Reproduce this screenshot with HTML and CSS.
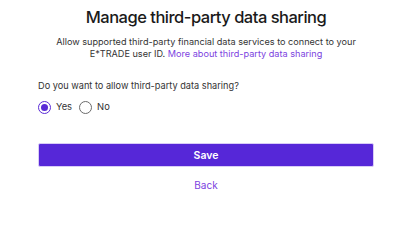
FILE: index.html
```html
<!DOCTYPE html>
<html>
<head>
<meta charset="utf-8">
<link rel="stylesheet" href="styles.css">
</head>
<body>
<main class="page">
  <h1 class="title">Manage third-party data sharing</h1>
  <p class="intro">Allow supported third-party financial data services to connect to your E*TRADE user ID. <a class="link" href="#">More about third-party data sharing</a></p>
  <form class="form">
    <p class="question">Do you want to allow third-party data sharing?</p>
    <div class="options">
      <label class="option"><span class="radio checked"></span>Yes</label>
      <label class="option"><span class="radio"></span>No</label>
    </div>
    <button class="save" type="button">Save</button>
    <a class="back" href="#">Back</a>
  </form>
</main>
</body>
</html>
```
FILE: styles.css
```css
html, body {
  margin: 0;
  padding: 0;
  background: #ffffff;
}
body {
  font-family: Inter, "Noto Sans", sans-serif;
  color: #1f1f1f;
}
.page {
  width: 336px;
  margin-left: 38px;
  padding-top: 5px;
  display: flex;
  flex-direction: column;
}
.title {
  margin: 0;
  font-size: 16.5px;
  line-height: 24px;
  font-weight: 500;
  letter-spacing: -0.5px;
  text-align: center;
  color: #1a1a1a;
}
.intro {
  margin: 7px 0 0;
  font-size: 9.15px;
  line-height: 12px;
  text-align: center;
  color: #333333;
}
.link {
  color: #7c3fe0;
  text-decoration: none;
}
.form {
  display: flex;
  flex-direction: column;
}
.question {
  margin: 20px 0 0;
  font-size: 9.2px;
  line-height: 12px;
  color: #333333;
}
.options {
  margin-top: 8px;
  display: flex;
  gap: 7px;
  align-items: center;
}
.option {
  display: flex;
  align-items: center;
  gap: 5px;
  font-size: 9.4px;
  line-height: 14px;
  color: #333333;
}
.radio {
  width: 11px;
  height: 11px;
  border: 1px solid #6b6b6b;
  border-radius: 50%;
  box-sizing: content-box;
  display: inline-block;
  position: relative;
}
.radio.checked {
  border-color: #5a2bd6;
}
.radio.checked::after {
  content: "";
  position: absolute;
  left: 2px;
  top: 2px;
  width: 7px;
  height: 7px;
  border-radius: 50%;
  background: #5a2bd6;
}
.save {
  margin-top: 29px;
  height: 24px;
  border: 1px solid #d9ccf7;
  border-radius: 2px;
  background: #5627d8;
  color: #ffffff;
  font-family: inherit;
  font-size: 10.5px;
  font-weight: 600;
  cursor: pointer;
}
.back {
  margin-top: 12px;
  align-self: center;
  font-size: 10px;
  line-height: 12px;
  color: #7c3fe0;
  text-decoration: none;
}
```
